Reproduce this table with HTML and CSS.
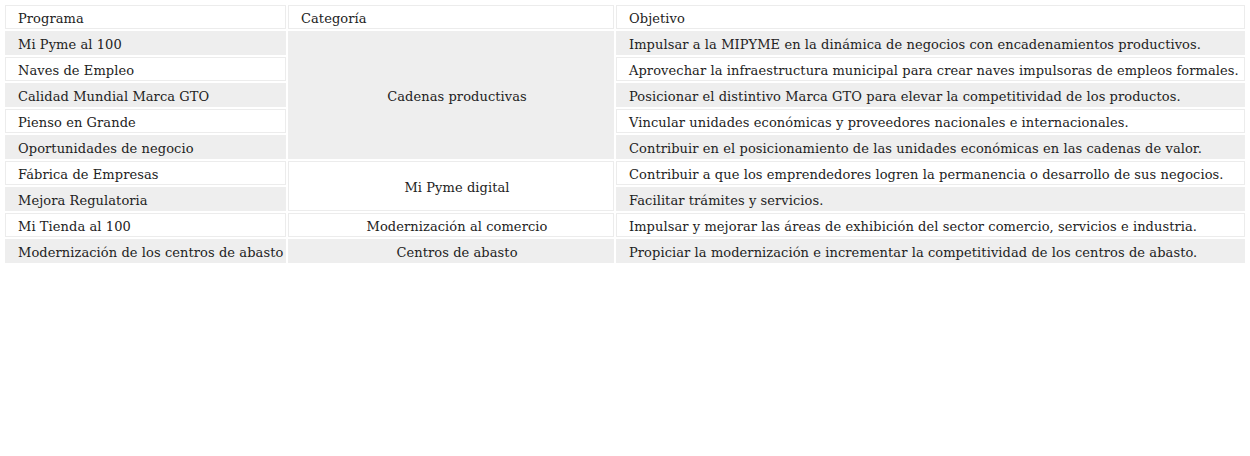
FILE: index.html
```html
<!DOCTYPE html>
<html lang="es">
<head>
<meta charset="utf-8">
<title>Programas</title>
<link rel="stylesheet" href="styles.css">
</head>
<body>
<table class="programs">
  <colgroup>
    <col class="c-prog">
    <col class="c-cat">
    <col class="c-obj">
  </colgroup>
  <thead>
    <tr>
      <th>Programa</th>
      <th>Categoría</th>
      <th>Objetivo</th>
    </tr>
  </thead>
  <tbody>
    <tr class="odd">
      <td>Mi Pyme al 100</td>
      <td class="cat odd" rowspan="5">Cadenas productivas</td>
      <td>Impulsar a la MIPYME en la dinámica de negocios con encadenamientos productivos.</td>
    </tr>
    <tr class="even">
      <td>Naves de Empleo</td>
      <td>Aprovechar la infraestructura municipal para crear naves impulsoras de empleos formales.</td>
    </tr>
    <tr class="odd">
      <td>Calidad Mundial Marca GTO</td>
      <td>Posicionar el distintivo Marca GTO para elevar la competitividad de los productos.</td>
    </tr>
    <tr class="even">
      <td>Pienso en Grande</td>
      <td>Vincular unidades económicas y proveedores nacionales e internacionales.</td>
    </tr>
    <tr class="odd">
      <td>Oportunidades de negocio</td>
      <td>Contribuir en el posicionamiento de las unidades económicas en las cadenas de valor.</td>
    </tr>
    <tr class="even">
      <td>Fábrica de Empresas</td>
      <td class="cat even" rowspan="2">Mi Pyme digital</td>
      <td>Contribuir a que los emprendedores logren la permanencia o desarrollo de sus negocios.</td>
    </tr>
    <tr class="odd">
      <td>Mejora Regulatoria</td>
      <td>Facilitar trámites y servicios.</td>
    </tr>
    <tr class="even">
      <td>Mi Tienda al 100</td>
      <td class="cat even">Modernización al comercio</td>
      <td>Impulsar y mejorar las áreas de exhibición del sector comercio, servicios e industria.</td>
    </tr>
    <tr class="odd">
      <td>Modernización de los centros de abasto</td>
      <td class="cat odd">Centros de abasto</td>
      <td>Propiciar la modernización e incrementar la competitividad de los centros de abasto.</td>
    </tr>
  </tbody>
</table>
</body>
</html>
```

FILE: styles.css
```css
html, body {
  margin: 0;
  padding: 0;
  background: #ffffff;
}

body {
  padding: 3px;
  font-family: "DejaVu Serif", "Liberation Serif", serif;
  font-size: 13px;
  letter-spacing: 0.08px;
  color: #222222;
}

.programs {
  border-collapse: separate;
  border-spacing: 2px;
  table-layout: fixed;
  width: 1244px;
}

.c-prog { width: 281px; }
.c-cat { width: 326px; }
.c-obj { width: auto; }

.programs th,
.programs td {
  padding: 4px 0 0 12px;
  border: 1px solid #ececec;
  background: #ffffff;
  text-align: left;
  font-weight: normal;
  white-space: nowrap;
  vertical-align: middle;
  line-height: 18px;
}

.programs tr.odd td {
  background: #eeeeee;
  border-color: #eeeeee;
}

.programs tr.even td {
  background: #ffffff;
  border-color: #ececec;
}

.programs td.cat {
  text-align: center;
}

.programs td.cat.odd {
  background: #eeeeee;
  border-color: #eeeeee;
}

.programs td.cat.even {
  background: #ffffff;
  border-color: #ececec;
}
```
